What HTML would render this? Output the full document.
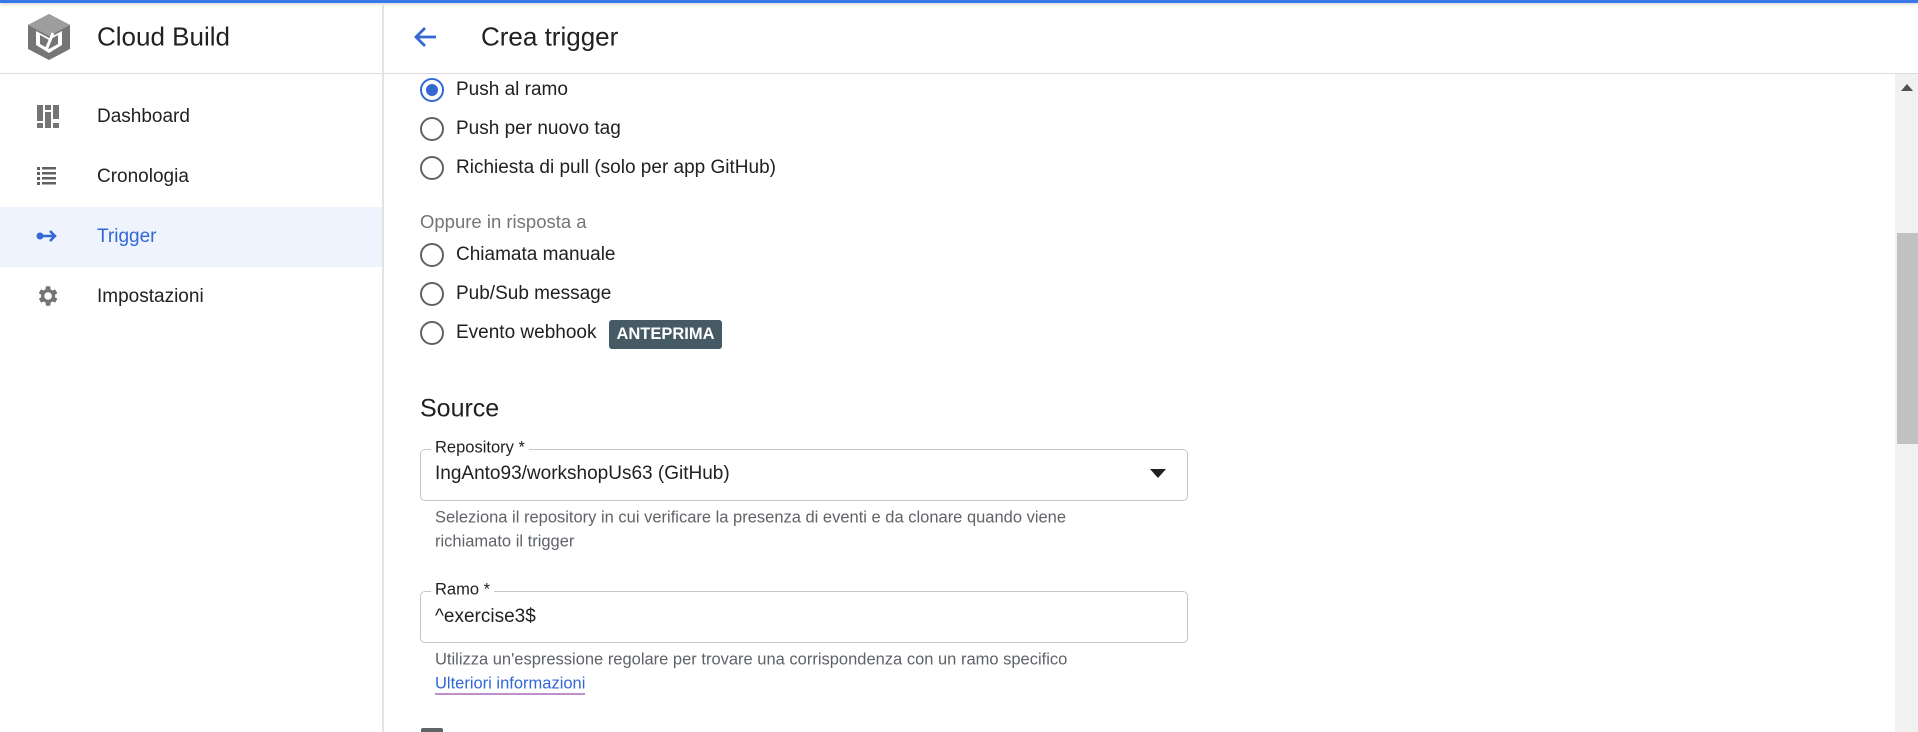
<!DOCTYPE html>
<html><head><meta charset="utf-8"><style>
*{margin:0;padding:0;box-sizing:border-box}
html,body{width:1918px;height:732px;overflow:hidden}
body{background:#fff;font-family:"Liberation Sans",Arial,sans-serif;color:#202124;position:relative}
.a{position:absolute;white-space:nowrap}
.topline{left:0;top:0;width:1918px;height:3px;background:#3b78e7;box-shadow:0 1px 3px rgba(0,0,0,.2)}
.hdr{left:0;top:73px;width:1918px;height:1px;background:#dadce0}
.side{left:382px;top:3px;width:2px;height:729px;background:#e3e3e3}
.nav{font-size:19px;left:97px;transform:translateY(-50%)}
.rad{left:420px;width:24px;height:24px;border:2.5px solid #5f6368;border-radius:50%;transform:translateY(-50%)}
.rt{left:456px;font-size:19px;transform:translateY(-50%)}
.box{left:420px;width:768px;border:1.3px solid #c4c7c9;border-radius:5px}
.lbl{font-size:16.5px;background:#fff;padding:0 4px;transform:translateY(-50%)}
.help{font-size:16.5px;color:#5f6368;transform:translateY(-50%)}
</style></head><body>
<div class="a topline"></div>
<div class="a hdr"></div>
<div class="a side"></div>
<svg class="a" style="left:26px;top:13px" width="46" height="48" viewBox="0 0 46 48">
<polygon points="23,1 44,12 44,36 23,47 2,36 2,12" fill="#757575"/>
<polygon points="23,1 44,12 23,23 2,12" fill="#9e9e9e"/>
<polygon points="10,18 23,25 36,18 36,32 23,40 10,32" fill="#fff"/>
<polygon points="14,22 23,27 32,22 32,31 23,36 14,31" fill="#757575"/>
<line x1="20" y1="37" x2="27" y2="20" stroke="#fff" stroke-width="3"/>
</svg>
<div class="a" style="left:97px;top:37px;transform:translateY(-50%);font-size:26px">Cloud Build</div>
<div class="a" style="left:0;top:207px;width:382px;height:60px;background:#eef3fd"></div>
<svg class="a" style="left:36px;top:104px" width="24" height="24" viewBox="0 0 24 24"><g fill="#757575"><rect x="1" y="1" width="6" height="16"/><rect x="1" y="19" width="6" height="5"/><rect x="9" y="1" width="6" height="5"/><rect x="9" y="8" width="6" height="16"/><rect x="17" y="1" width="6" height="14"/><rect x="17" y="19" width="6" height="5"/></g></svg>
<svg class="a" style="left:36px;top:165px" width="22" height="22" viewBox="0 0 22 22"><g fill="#616161"><rect x="1" y="2" width="3" height="3"/><rect x="6" y="2" width="14" height="2.5"/><rect x="1" y="7" width="3" height="3"/><rect x="6" y="7" width="14" height="2.5"/><rect x="1" y="12" width="3" height="3"/><rect x="6" y="12" width="14" height="2.5"/><rect x="1" y="17" width="3" height="3"/><rect x="6" y="17" width="14" height="2.5"/></g></svg>
<svg class="a" style="left:36px;top:228px" width="22" height="16" viewBox="0 0 22 16"><circle cx="4" cy="8" r="3.5" fill="#3367d6"/><path d="M4 8H19M14 3l5 5-5 5" stroke="#3367d6" stroke-width="2.5" fill="none"/></svg>
<svg class="a" style="left:34px;top:283px" width="26" height="26" viewBox="0 0 24 24"><path fill="#757575" d="M19.4 13a7.5 7.5 0 0 0 0-2l2.1-1.6-2-3.5-2.5 1a7.5 7.5 0 0 0-1.7-1L15 3h-4l-.4 2.9a7.5 7.5 0 0 0-1.7 1l-2.5-1-2 3.5L6.6 11a7.5 7.5 0 0 0 0 2l-2.1 1.6 2 3.5 2.5-1a7.5 7.5 0 0 0 1.7 1L11 21h4l.4-2.9a7.5 7.5 0 0 0 1.7-1l2.5 1 2-3.5zM13 15.5A3.5 3.5 0 1 1 13 8.5a3.5 3.5 0 0 1 0 7z"/></svg>
<div class="a nav" style="top:117px">Dashboard</div>
<div class="a nav" style="top:177px">Cronologia</div>
<div class="a nav" style="top:237px;color:#3367d6">Trigger</div>
<div class="a nav" style="top:297px">Impostazioni</div>
<svg class="a" style="left:412px;top:25px" width="26" height="24" viewBox="0 0 26 24"><path d="M24 12H4M13 3l-9 9 9 9" stroke="#3367d6" stroke-width="2.8" fill="none"/></svg>
<div class="a" style="left:481px;top:37px;transform:translateY(-50%);font-size:26px">Crea trigger</div>
<div class="a rad" style="top:90px;border-color:#3367d6"><div style="position:absolute;left:3.5px;top:3.5px;width:12px;height:12px;border-radius:50%;background:#3367d6"></div></div>
<div class="a rt" style="top:90px">Push al ramo</div>
<div class="a rad" style="top:129px"></div><div class="a rt" style="top:129px">Push per nuovo tag</div>
<div class="a rad" style="top:168px"></div><div class="a rt" style="top:168px">Richiesta di pull (solo per app GitHub)</div>
<div class="a" style="left:420px;top:222px;transform:translateY(-50%);font-size:18.5px;color:#757575">Oppure in risposta a</div>
<div class="a rad" style="top:255px"></div><div class="a rt" style="top:255px">Chiamata manuale</div>
<div class="a rad" style="top:294px"></div><div class="a rt" style="top:294px">Pub/Sub message</div>
<div class="a rad" style="top:333px"></div><div class="a rt" style="top:333px">Evento webhook</div>
<div class="a" style="left:609px;top:320px;width:113px;height:29px;background:#455a64;border-radius:3px;color:#fff;font-size:16.5px;font-weight:bold;text-align:center;line-height:29px">ANTEPRIMA</div>
<div class="a" style="left:420px;top:409px;transform:translateY(-50%);font-size:25px">Source</div>
<div class="a box" style="top:449px;height:52px"></div>
<div class="a lbl" style="left:431px;top:448px">Repository *</div>
<div class="a" style="left:435px;top:474px;transform:translateY(-50%);font-size:19px">IngAnto93/workshopUs63 (GitHub)</div>
<svg class="a" style="left:1150px;top:469px" width="16" height="10"><polygon points="0,0 16,0 8,9" fill="#202124"/></svg>
<div class="a help" style="left:435px;top:518px">Seleziona il repository in cui verificare la presenza di eventi e da clonare quando viene</div>
<div class="a help" style="left:435px;top:542px">richiamato il trigger</div>
<div class="a box" style="top:591px;height:52px"></div>
<div class="a lbl" style="left:431px;top:590px">Ramo *</div>
<div class="a" style="left:435px;top:617px;transform:translateY(-50%);font-size:19px">^exercise3$</div>
<div class="a help" style="left:435px;top:660px">Utilizza un'espressione regolare per trovare una corrispondenza con un ramo specifico</div>
<div class="a help" style="left:435px;top:684px;color:#3367d6;border-bottom:1.5px solid #7b1fa2;line-height:20px">Ulteriori informazioni</div>
<div class="a" style="left:421px;top:728px;width:22px;height:4px;background:#5f6368;border-radius:2px 2px 0 0"></div>
<div class="a" style="left:1895px;top:74px;width:23px;height:658px;background:#f1f1f1"></div>
<svg class="a" style="left:1901px;top:84px" width="12" height="8"><polygon points="0,7 12,7 6,0" fill="#505050"/></svg>
<div class="a" style="left:1897px;top:233px;width:21px;height:211px;background:#c1c1c1"></div>
</body></html>
